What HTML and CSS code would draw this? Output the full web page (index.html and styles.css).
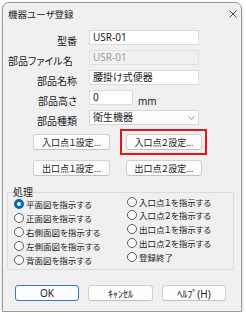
FILE: index.html
```html
<!DOCTYPE html>
<html lang="ja">
<head>
    <meta charset="UTF-8">
    <meta name="viewport" content="width=device-width, initial-scale=1.0">
    <title>機器ユーザ登録</title>
    <link rel="stylesheet" href="styles.css">
</head>
<body>
    <div class="dialog">
        <div class="titlebar">
            <span class="title">機器ユーザ登録</span>
            <svg class="close" width="8" height="8" viewBox="0 0 8 8">
                <path d="M0.5 0.5L7.5 7.5M7.5 0.5L0.5 7.5" stroke="#333" stroke-width="0.9" fill="none"/>
            </svg>
        </div>

        <div class="form">
            <span class="lbl">型番</span>
            <div class="field">USR-01</div>

            <span class="lbl lbl-left">部品ファイル名</span>
            <div class="field disabled">USR-01</div>

            <span class="lbl">部品名称</span>
            <div class="field">腰掛け式便器</div>

            <span class="lbl">部品高さ</span>
            <div class="height-row">
                <div class="field short">0</div>
                <span class="unit">mm</span>
            </div>

            <span class="lbl">部品種類</span>
            <div class="field select">
                <span>衛生機器</span>
                <svg width="7" height="4" viewBox="0 0 7 4">
                    <path d="M0.5 0.5L3.5 3.3L6.5 0.5" stroke="#777" stroke-width="0.8" fill="none"/>
                </svg>
            </div>
        </div>

        <div class="points">
            <div class="btn">入口点１設定...</div>
            <div class="btn marked">入口点２設定...</div>
            <div class="btn">出口点１設定...</div>
            <div class="btn">出口点２設定...</div>
        </div>

        <fieldset class="group">
            <legend>処理</legend>
            <div class="cols">
                <div class="col">
                    <div class="radio"><span class="dot on"></span>平面図を指示する</div>
                    <div class="radio"><span class="dot"></span>正面図を指示する</div>
                    <div class="radio"><span class="dot"></span>右側面図を指示する</div>
                    <div class="radio"><span class="dot"></span>左側面図を指示する</div>
                    <div class="radio"><span class="dot"></span>背面図を指示する</div>
                </div>
                <div class="col col-right">
                    <div class="radio short"><span class="dot"></span>入口点１を指示する</div>
                    <div class="radio"><span class="dot"></span>入口点２を指示する</div>
                    <div class="radio"><span class="dot"></span>出口点１を指示する</div>
                    <div class="radio"><span class="dot"></span>出口点２を指示する</div>
                    <div class="radio"><span class="dot"></span>登録終了</div>
                </div>
            </div>
        </fieldset>

        <div class="footer">
            <div class="btn default">OK</div>
            <div class="btn wide">ｷｬﾝｾﾙ</div>
            <div class="btn">ﾍﾙﾌﾟ(H)</div>
        </div>
    </div>
</body>
</html>
```

FILE: styles.css
```css
body {
    margin: 0;
    background: #ffffff;
    font-family: "Noto Sans", "Noto Sans CJK JP", sans-serif;
    font-size: 10px;
    font-feature-settings: "palt";
    color: #1b1b1b;
}
.dialog {
    box-sizing: border-box;
    width: 240px;
    height: 310px;
    margin: 2px 0 0 2px;
    border: 1px solid #9c9c9c;
    border-radius: 7px 7px 0 0;
    background: #f0f0f0;
    box-shadow: 0 1px 3px rgba(0, 0, 0, 0.25);
    display: flex;
    flex-direction: column;
}
.titlebar {
    height: 22px;
    display: flex;
    align-items: center;
    justify-content: space-between;
    padding: 0 4px 0 5px;
}
.title {
    font-size: 9.5px;
    color: #222;
}
.form {
    display: grid;
    grid-template-columns: 74px auto;
    grid-auto-rows: 15px;
    column-gap: 12px;
    row-gap: 5px;
    margin-top: 5px;
}
.lbl {
    justify-self: end;
    align-self: end;
    line-height: 15px;
    margin-bottom: -4px;
    white-space: nowrap;
}
.lbl-left {
    justify-self: start;
    margin-left: 5px;
}
.field {
    box-sizing: border-box;
    width: 110px;
    height: 15px;
    padding: 0 3px;
    border: 1px solid #dcdcdc;
    background: #ffffff;
    line-height: 13px;
    white-space: nowrap;
}
.field.disabled {
    background: #f0f0f0;
    border-color: #e2e2e2;
    color: #9e9e9e;
}
.field.short {
    width: 44px;
}
.height-row {
    display: flex;
    align-items: flex-end;
}
.unit {
    margin-left: 5px;
    line-height: 15px;
    margin-bottom: -4px;
}
.select {
    display: flex;
    justify-content: space-between;
    align-items: center;
    background: #fdfdfd;
    border-color: #d6d6d6;
}
.points {
    display: grid;
    grid-template-columns: 77px 76px;
    column-gap: 16px;
    row-gap: 10px;
    margin: 9px 0 0 30px;
}
.btn {
    box-sizing: border-box;
    height: 16px;
    display: flex;
    align-items: center;
    justify-content: center;
    border: 1px solid #d2d2d2;
    border-bottom-color: #c2c2c2;
    border-radius: 3px;
    background: #fdfdfd;
    white-space: nowrap;
}
.points .btn {
    font-size: 9px;
}
.marked {
    position: relative;
}
.marked::after {
    content: "";
    position: absolute;
    top: -6px;
    right: -6px;
    bottom: -6px;
    left: -7px;
    border: 2px solid #e8141c;
}
.group {
    margin: 10px 7px 0 4px;
    padding: 0 0 2px 6px;
    border: 1px solid #dcdcdc;
    min-width: 0;
}
.group legend {
    padding: 0;
    margin-left: -1px;
    line-height: 12px;
}
.cols {
    display: grid;
    grid-template-columns: 113px auto;
    margin-top: -1px;
    font-size: 8.5px;
}
.col-right {
    margin-top: -1px;
}
.radio {
    display: flex;
    align-items: center;
    gap: 2px;
    height: 14px;
    line-height: 11px;
    white-space: nowrap;
}
.radio.short {
    height: 12px;
}
.dot {
    box-sizing: border-box;
    width: 10px;
    height: 10px;
    border-radius: 50%;
    border: 1px solid #5c5c5c;
    background: #ffffff;
}
.dot.on {
    border: 3px solid #0067c0;
}
.footer {
    display: flex;
    gap: 9px;
    margin: 15px 0 0 12px;
}
.footer .btn {
    width: 64px;
}
.footer .wide {
    width: 65px;
}
.footer .default {
    border: 1px solid #2b7bd3;
}
```
